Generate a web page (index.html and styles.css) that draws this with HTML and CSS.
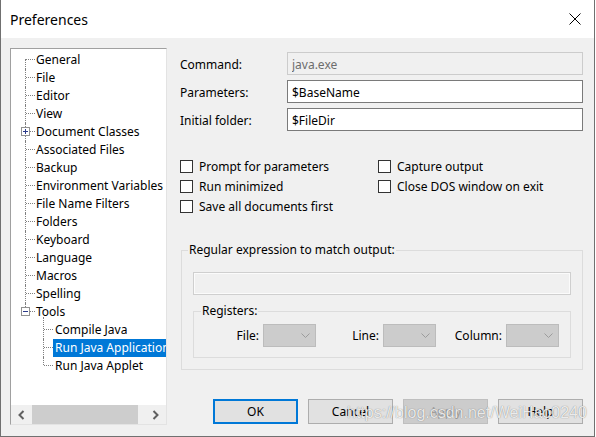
FILE: index.html
```html
<!DOCTYPE html>
<html lang="en">
<head>
  <meta charset="UTF-8" />
  <title>Preferences</title>
  <link rel="stylesheet" href="styles.css">
</head>
<body>

  <div class="window">
    <div class="titlebar">
      <span class="title">Preferences</span>
      <svg class="close" width="12" height="12" viewBox="0 0 12 12">
        <path d="M0.5 0.5L11.5 11.5M11.5 0.5L0.5 11.5" stroke="#000" stroke-width="1" fill="none"/>
      </svg>
    </div>

    <div class="main">
      <!-- Category tree -->
      <div class="tree">
        <ul class="nodes">
          <li class="first">General</li>
          <li>File</li>
          <li>Editor</li>
          <li>View</li>
          <li>
            <svg class="toggle" width="9" height="9" viewBox="0 0 9 9">
              <rect x="0.5" y="0.5" width="8" height="8" fill="#fff" stroke="#919191"/>
              <path d="M2 4.5H7M4.5 2V7" stroke="#2b3a8a" fill="none"/>
            </svg>
            Document Classes
          </li>
          <li>Associated Files</li>
          <li>Backup</li>
          <li>Environment Variables</li>
          <li>File Name Filters</li>
          <li>Folders</li>
          <li>Keyboard</li>
          <li>Language</li>
          <li>Macros</li>
          <li>Spelling</li>
          <li class="last">
            <svg class="toggle" width="9" height="9" viewBox="0 0 9 9">
              <rect x="0.5" y="0.5" width="8" height="8" fill="#fff" stroke="#919191"/>
              <path d="M2 4.5H7" stroke="#2b3a8a" fill="none"/>
            </svg>
            Tools
          </li>
          <li class="child start">Compile Java</li>
          <li class="child selected"><span>Run Java Application</span></li>
          <li class="child end">Run Java Applet</li>
        </ul>
        <div class="hscroll">
          <div class="arrow">
            <svg width="7" height="10" viewBox="0 0 7 10"><path d="M5.5 1L1.5 5L5.5 9" stroke="#606060" stroke-width="2" fill="none"/></svg>
          </div>
          <div class="track"><div class="thumb"></div></div>
          <div class="arrow">
            <svg width="7" height="10" viewBox="0 0 7 10"><path d="M1.5 1L5.5 5L1.5 9" stroke="#606060" stroke-width="2" fill="none"/></svg>
          </div>
        </div>
      </div>

      <!-- Tool settings -->
      <div class="panel">
        <div class="fields">
          <label>Command:</label>
          <input type="text" value="java.exe" disabled />
          <label>Parameters:</label>
          <input type="text" value="$BaseName" />
          <label>Initial folder:</label>
          <input type="text" value="$FileDir" />
        </div>

        <div class="checks">
          <div class="check"><span class="box"></span>Prompt for parameters</div>
          <div class="check"><span class="box"></span>Capture output</div>
          <div class="check"><span class="box"></span>Run minimized</div>
          <div class="check"><span class="box"></span>Close DOS window on exit</div>
          <div class="check"><span class="box"></span>Save all documents first</div>
        </div>

        <fieldset class="group">
          <legend>Regular expression to match output:</legend>
          <div class="regex"></div>
          <fieldset class="registers">
            <legend>Registers:</legend>
            <div class="regrow">
              <div class="cell">File:<span class="combo"><svg width="9" height="5" viewBox="0 0 9 5"><path d="M0.5 0.5L4.5 4.5L8.5 0.5" stroke="#9c9c9c" fill="none"/></svg></span></div>
              <div class="cell">Line:<span class="combo"><svg width="9" height="5" viewBox="0 0 9 5"><path d="M0.5 0.5L4.5 4.5L8.5 0.5" stroke="#9c9c9c" fill="none"/></svg></span></div>
              <div class="cell">Column:<span class="combo"><svg width="9" height="5" viewBox="0 0 9 5"><path d="M0.5 0.5L4.5 4.5L8.5 0.5" stroke="#9c9c9c" fill="none"/></svg></span></div>
            </div>
          </fieldset>
        </fieldset>

        <div class="buttons">
          <button class="default">OK</button>
          <button>Cancel</button>
          <button disabled>Apply</button>
          <button>Help</button>
        </div>
      </div>
    </div>

    <span class="watermark">https://blog.csdn.net/WeiHao0240</span>
  </div>

</body>
</html>
```

FILE: styles.css
```css
* {
  box-sizing: border-box;
}

body {
  margin: 0;
  background: #fff;
  font-family: "Noto Sans", sans-serif;
  font-size: 12px;
  color: #000;
}

.window {
  position: relative;
  width: 595px;
  height: 437px;
  border: 1px solid #707070;
  border-top: none;
  background: #f0f0f0;
  display: flex;
  flex-direction: column;
}

.titlebar {
  height: 38px;
  flex: none;
  background: #fff;
  display: flex;
  align-items: center;
  justify-content: space-between;
  padding: 0 13px 0 9px;
}

.title {
  font-size: 14px;
}

.main {
  flex: 1;
  display: flex;
  gap: 13px;
  padding: 10px 0 0 9px;
}

/* tree */
.tree {
  width: 157px;
  height: 377px;
  background: #fff;
  border: 1px solid;
  border-color: #a0a0a0 #e3e3e3 #e3e3e3 #a0a0a0;
  display: flex;
  flex-direction: column;
}

.nodes {
  flex: 1;
  list-style: none;
  margin: 0;
  padding: 2px 0 0;
  overflow: hidden;
}

.nodes li {
  position: relative;
  height: 18px;
  line-height: 18px;
  padding-left: 25px;
  white-space: nowrap;
}

.nodes li::before {
  content: "";
  position: absolute;
  left: 15px;
  top: 8px;
  width: 9px;
  border-top: 1px dotted #808080;
}

.nodes li::after {
  content: "";
  position: absolute;
  left: 14px;
  top: 0;
  height: 18px;
  border-left: 1px dotted #808080;
}

.nodes li.first::after {
  top: 8px;
  height: 10px;
}

.nodes li.last::after {
  height: 8px;
}

.nodes li.child {
  padding-left: 44px;
}

.nodes li.child::before {
  left: 33px;
}

.nodes li.child::after {
  left: 32px;
}

.nodes li.child.start::after {
  top: -4px;
  height: 22px;
}

.nodes li.child.end::after {
  height: 8px;
}

.nodes li.selected span {
  display: inline-block;
  margin-left: -2px;
  padding: 0 2px;
  line-height: 18px;
  background: #0078d7;
  color: #fff;
}

.toggle {
  position: absolute;
  left: 10px;
  top: 4px;
  z-index: 1;
  display: block;
}

.hscroll {
  height: 19px;
  flex: none;
  display: flex;
  background: #f0f0f0;
}

.arrow {
  width: 21px;
  display: flex;
  align-items: center;
  justify-content: center;
}

.track {
  flex: 1;
}

.thumb {
  width: 106px;
  height: 100%;
  background: #cdcdcd;
}

/* right side */
.panel {
  width: 403px;
  display: flex;
  flex-direction: column;
  padding-top: 4px;
}

.fields {
  display: grid;
  grid-template-columns: 107px 1fr;
  row-gap: 5px;
  align-items: center;
}

.fields label {
  padding-top: 1px;
}

.fields input {
  height: 23px;
  border: 1px solid #7a7a7a;
  padding: 1px 4px 0;
  font: inherit;
  color: #000;
  background: #fff;
  outline: none;
}

.fields input:disabled {
  border-color: #cccccc;
  background: #f0f0f0;
  color: #6d6d6d;
}

.checks {
  margin-top: 25px;
  display: grid;
  grid-template-columns: 198px 1fr;
  grid-auto-rows: 20px;
}

.check {
  display: flex;
  align-items: center;
  gap: 6px;
}

.box {
  width: 13px;
  height: 13px;
  border: 1px solid #333;
  background: #fff;
}

fieldset {
  margin: 0;
  min-width: 0;
  border: 1px solid #dcdcdc;
}

legend {
  line-height: 16px;
  padding: 0 1px;
}

.group {
  margin: 26px 0 0 1px;
  padding: 0 11px 11px;
}

.group > legend {
  margin-left: -5px;
}

.regex {
  margin-top: 14px;
  height: 23px;
  border: 1px solid #cfcfcf;
  box-shadow: inset 0 0 0 1px #fbfbfb;
  background: #f0f0f0;
}

.registers {
  margin-top: 8px;
  padding: 0 0 10px;
}

.registers > legend {
  margin-left: 7px;
}

.regrow {
  margin-top: 5px;
  display: grid;
  grid-template-columns: 122px 120px 123px;
}

.cell {
  display: flex;
  align-items: center;
  justify-content: flex-end;
  gap: 4px;
}

.combo {
  width: 53px;
  height: 23px;
  background: #cccccc;
  border: 1px solid #bcbcbc;
  display: flex;
  align-items: center;
  justify-content: flex-end;
  padding-right: 5px;
}

.buttons {
  margin-top: 29px;
  display: flex;
  justify-content: flex-end;
  gap: 10px;
}

.buttons button {
  width: 85px;
  height: 25px;
  font: inherit;
  color: #000;
  background: #e1e1e1;
  border: 1px solid #adadad;
  padding: 0;
}

.buttons button.default {
  border: 2px solid #0078d7;
}

.buttons button:disabled {
  background: #cccccc;
  border-color: #bfbfbf;
  color: #a0a0a0;
}

.watermark {
  position: absolute;
  left: 346px;
  top: 403px;
  font-family: "Liberation Sans", sans-serif;
  font-size: 16px;
  line-height: 20px;
  color: rgba(255, 255, 255, 0.85);
  text-shadow: 0 0 1px rgba(0, 0, 0, 0.5);
  pointer-events: none;
}
```
